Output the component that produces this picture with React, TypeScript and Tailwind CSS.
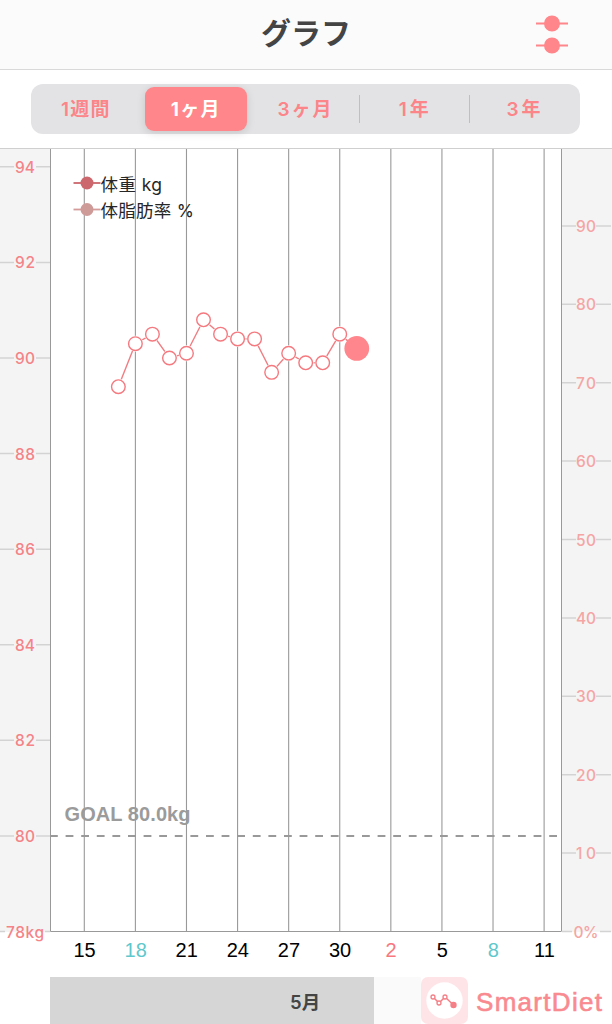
const periods = [
  { label: "1週間", tracking: "tracking-[1.3px]" },
  { label: "1ヶ月", tracking: "tracking-[1.3px]" },
  { label: "3ヶ月", tracking: "tracking-[2px]" },
  { label: "1年", tracking: "tracking-[3px]" },
  { label: "3年", tracking: "tracking-[3px]" },
];
const activePeriod = 1;

// one entry per day, starting on May 17
const weights = [
  89.4, 90.3, 90.5, 90.0, 90.1, 90.8, 90.5, 90.4, 90.4, 89.7, 90.1, 89.9, 89.9,
  90.5, 90.2,
];

const days = [
  { label: "15", color: "text-black" },
  { label: "18", color: "text-[#5fc8cc]" },
  { label: "21", color: "text-black" },
  { label: "24", color: "text-black" },
  { label: "27", color: "text-black" },
  { label: "30", color: "text-black" },
  { label: "2", color: "text-[#f9777e]" },
  { label: "5", color: "text-black" },
  { label: "8", color: "text-[#5fc8cc]" },
  { label: "11", color: "text-black" },
];

const kgTicks = [94, 92, 90, 88, 86, 84, 82, 80, 78];
const fatTicks = [90, 80, 70, 60, 50, 40, 30, 20, 10, 0];

const BOTTOM = 782.5;
const kgY = (kg: number) => BOTTOM - (kg - 78) * 47.79;
const fatY = (fat: number) => BOTTOM - fat * 7.84;
const dayX = (day: number) => 34.3 + day * 17.03;

function Header() {
  return (
    <header className="relative flex h-[70px] items-center justify-center border-b border-[#d9d9da] bg-[#fbfbfb]">
      <h1 className="-mt-1 text-[30px] font-bold leading-none text-[#444]">
        グラフ
      </h1>
      <svg
        className="absolute right-[43px] top-[13px] h-[42px] w-[34px]"
        viewBox="0 0 34 42"
        fill="#ff868a"
        stroke="#ff868a"
        strokeWidth="2"
      >
        <path d="M1 10.5h32M1 32.5h32" />
        <circle cx="17" cy="10.5" r="7" />
        <circle cx="17" cy="32.5" r="7" />
      </svg>
    </header>
  );
}

function PeriodTabs() {
  return (
    <div className="flex h-[79px] border-b border-[#cfcfd0] bg-white pl-[31px] pt-3.5">
      <div className="flex h-[50px] w-[549px] items-center rounded-xl bg-[#e3e3e5]">
        {periods.map((period, index) => (
          <div
            key={period.label}
            className="relative flex h-full flex-1 items-center justify-center"
          >
            {index === activePeriod ? (
              <span className="flex h-11 w-[102px] items-center justify-center rounded-[9px] bg-[#ff868a] pt-[3px] text-[19px] font-bold tracking-[1.3px] text-white shadow-[0_2px_8px_rgba(0,0,0,0.13)]">
                {period.label}
              </span>
            ) : (
              <span
                className={`pt-[3px] text-[19px] font-semibold text-[#fb8589] ${period.tracking}`}
              >
                {period.label}
              </span>
            )}
            {index > activePeriod && index < periods.length - 1 && (
              <span className="absolute right-0 h-7 w-px bg-[#bfbfc2]" />
            )}
          </div>
        ))}
      </div>
    </div>
  );
}

function KgAxis() {
  return (
    <svg className="h-[783px] w-[50px] shrink-0 overflow-visible bg-[#f4f4f4]">
      {kgTicks.map((kg) => {
        const last = kg === 78;
        const y = kgY(kg);
        return (
          <g key={kg}>
            <path
              d={last ? `M0 ${y}h5M45 ${y}h5` : `M0 ${y}h14M36 ${y}h14`}
              stroke="#d3d3d3"
              strokeWidth="1.5"
            />
            <text
              x="25"
              y={y + 6}
              textAnchor="middle"
              textLength={last ? 38 : 20}
              fill="#f58388"
              className="text-[15.5px] font-medium"
            >
              {last ? "78kg" : kg}
            </text>
          </g>
        );
      })}
    </svg>
  );
}

function FatAxis() {
  return (
    <svg className="h-[783px] w-[51px] shrink-0 overflow-visible bg-[#f4f4f4]">
      {fatTicks.map((fat) => {
        const y = fatY(fat);
        return (
          <g key={fat}>
            <path
              d={fat ? `M1 ${y}h14M35 ${y}h15` : `M1 ${y}h10M39 ${y}h11`}
              stroke="#d3d3d3"
              strokeWidth="1.5"
            />
            <text
              x="25"
              y={y + 6}
              textAnchor="middle"
              textLength={fat ? 20 : 25}
              fill="#f5a5a3"
              className="text-[15.5px] font-medium"
            >
              {fat || "0%"}
            </text>
          </g>
        );
      })}
      <path d={`M.5 0V${BOTTOM}`} stroke="#999" />
    </svg>
  );
}

function Plot() {
  const points = weights.map((kg, index) => ({
    x: dayX(index + 2),
    y: kgY(kg),
  }));

  return (
    <svg className="h-[783px] w-[511px] shrink-0 overflow-visible bg-white">
      {days.map((day, index) => (
        <path
          key={day.label}
          d={`M${dayX(index * 3)} 0V${BOTTOM}`}
          stroke="#999"
          strokeWidth="1.1"
        />
      ))}
      <path d={`M.5 0V${BOTTOM}H511`} fill="none" stroke="#999" />

      <text
        x="14.5"
        y="672"
        textLength="126"
        fill="#9b9b9b"
        className="font-['Liberation_Sans'] text-[20px] font-bold"
      >
        GOAL 80.0kg
      </text>
      <path
        d={`M0 ${kgY(80)}h511`}
        stroke="#999"
        strokeWidth="2"
        strokeDasharray="7.8 7.8"
      />

      <path d="M23.5 34h27" stroke="#cb676d" strokeWidth="1.8" />
      <circle cx="37" cy="34" r="6.5" fill="#cb676d" />
      <text
        x="50.5"
        y="41.5"
        textLength="61.5"
        fill="#262626"
        className="text-[17.5px]"
      >
        体重 kg
      </text>
      <path d="M23.5 60.5h27" stroke="#d49b9a" strokeWidth="1.8" />
      <circle cx="37" cy="60.5" r="6.5" fill="#cf9b99" />
      <text
        x="50.5"
        y="67.5"
        textLength="93.5"
        fill="#262626"
        className="text-[17.5px]"
      >
        体脂肪率 %
      </text>

      <polyline
        points={points.map((p) => `${p.x},${p.y}`).join(" ")}
        fill="none"
        stroke="#ef7d82"
        strokeWidth="1.4"
      />
      {points.map((p, index) =>
        index === points.length - 1 ? (
          <circle key={index} cx={p.x} cy={p.y} r="12.4" fill="#ff868c" />
        ) : (
          <g key={index}>
            <circle cx={p.x} cy={p.y} r="8" fill="#fff" />
            <circle
              cx={p.x}
              cy={p.y}
              r="6.8"
              fill="#fff"
              stroke="#f5797f"
              strokeWidth="1.4"
            />
          </g>
        )
      )}
    </svg>
  );
}

function DayLabels() {
  return (
    <div className="ml-[59px] flex h-[45px] w-[511px] pt-[3px] font-['Liberation_Sans'] text-[20px] leading-[30px]">
      {days.map((day) => (
        <span key={day.label} className={`w-[51.1px] text-center ${day.color}`}>
          {day.label}
        </span>
      ))}
    </div>
  );
}

function Footer() {
  return (
    <footer className="flex h-[47px] pl-[50px]">
      <div className="w-[324px] bg-[#d6d6d6] pl-60 text-[18.5px] font-semibold leading-[50px] text-[#444]">
        5月
      </div>
      <div className="w-[47px] bg-[#fafafa]" />
      <div className="flex flex-1 items-center">
        <svg className="h-[47px] w-[47px] shrink-0" viewBox="0 0 47 47">
          <rect width="47" height="47" rx="7" fill="#ffe4e7" />
          <circle cx="23.5" cy="23.5" r="18.2" fill="#fff" />
          <path
            d="M12 20L18 26L24 20L32.5 28"
            fill="none"
            stroke="#f47f86"
            strokeWidth="1.5"
          />
          <g fill="#fff" stroke="#f47f86" strokeWidth="1.3">
            <circle cx="12" cy="20" r="2" />
            <circle cx="18" cy="26" r="2" />
            <circle cx="24" cy="20" r="2" />
          </g>
          <circle cx="32.5" cy="28" r="3.2" fill="#f47f86" />
        </svg>
        <span className="ml-2 pt-0.5 font-['Liberation_Sans'] text-[26px] leading-none tracking-[1.3px] text-[#f98a90] [-webkit-text-stroke:0.6px_#f98a90]">
          SmartDiet
        </span>
      </div>
    </footer>
  );
}

export default function App() {
  return (
    <div className="h-[1024px] w-[612px] overflow-hidden bg-white font-[Inter,'Noto_Sans_CJK_JP',sans-serif]">
      <Header />
      <PeriodTabs />
      <main className="flex h-[783px]">
        <KgAxis />
        <Plot />
        <FatAxis />
      </main>
      <DayLabels />
      <Footer />
    </div>
  );
}
